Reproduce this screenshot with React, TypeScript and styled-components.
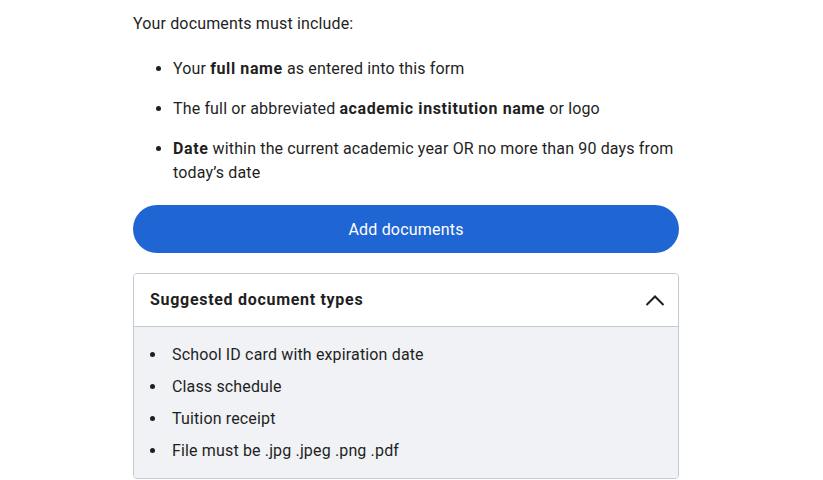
import styled, { createGlobalStyle } from 'styled-components';

const GlobalStyle = createGlobalStyle`
  body {
    margin: 0;
    background: #ffffff;
    font-family: Roboto, 'Liberation Sans', Arial, sans-serif;
    color: #1f1f1f;
    letter-spacing: 0.15px;
  }
`;

const Page = styled.div`
  width: 546px;
  margin-left: 133px;
  padding-top: 12px;
  display: flex;
  flex-direction: column;
  gap: 20px;
  font-size: 16px;
  line-height: 24px;
  b {
    font-weight: 700;
    letter-spacing: 0.6px;
  }
`;

const Intro = styled.p`
  margin: 0 0 1px;
`;

const Requirements = styled.ul`
  margin: 0;
  padding-left: 40px;
  display: flex;
  flex-direction: column;
  gap: 16px;
`;

const PrimaryButton = styled.button`
  height: 48px;
  border: none;
  border-radius: 24px;
  background: #1f66d4;
  color: #ffffff;
  font-family: inherit;
  font-size: 16px;
  letter-spacing: 0.2px;
  cursor: pointer;
`;

const Accordion = styled.section`
  border: 1px solid #c2cad6;
  border-radius: 4px;
  overflow: hidden;
`;

const AccordionHeader = styled.div`
  display: flex;
  align-items: center;
  justify-content: space-between;
  padding: 14px 13px 14px 16px;
  background: #ffffff;
  border-bottom: 1px solid #c2cad6;
  h4 {
    margin: 0;
    font-size: 16px;
    font-weight: 700;
    line-height: 24px;
    letter-spacing: 0.7px;
  }
`;

const AccordionBody = styled.ul`
  margin: 0;
  background: #f0f2f5;
  padding: 16px 16px 15px 33px;
  display: flex;
  flex-direction: column;
  gap: 8px;
  li {
    padding-left: 5px;
  }
`;

const Chevron = () => (
  <svg width='20' height='13' viewBox='0 0 20 13' fill='none'>
    <polyline points='1.5,11 10,2.5 18.5,11' stroke='#1f1f1f' strokeWidth='2' />
  </svg>
);

const App = () => {
  return (
    <>
      <GlobalStyle />
      <Page>
        <Intro>Your documents must include:</Intro>
        <Requirements>
          <li>
            Your <b>full name</b> as entered into this form
          </li>
          <li>
            The full or abbreviated <b>academic institution name</b> or logo
          </li>
          <li>
            <b>Date</b> within the current academic year OR no more than 90 days from
            today’s date
          </li>
        </Requirements>
        <PrimaryButton>Add documents</PrimaryButton>
        <Accordion>
          <AccordionHeader>
            <h4>Suggested document types</h4>
            <Chevron />
          </AccordionHeader>
          <AccordionBody>
            <li>School ID card with expiration date</li>
            <li>Class schedule</li>
            <li>Tuition receipt</li>
            <li>File must be .jpg .jpeg .png .pdf</li>
          </AccordionBody>
        </Accordion>
      </Page>
    </>
  );
};

export default App;
